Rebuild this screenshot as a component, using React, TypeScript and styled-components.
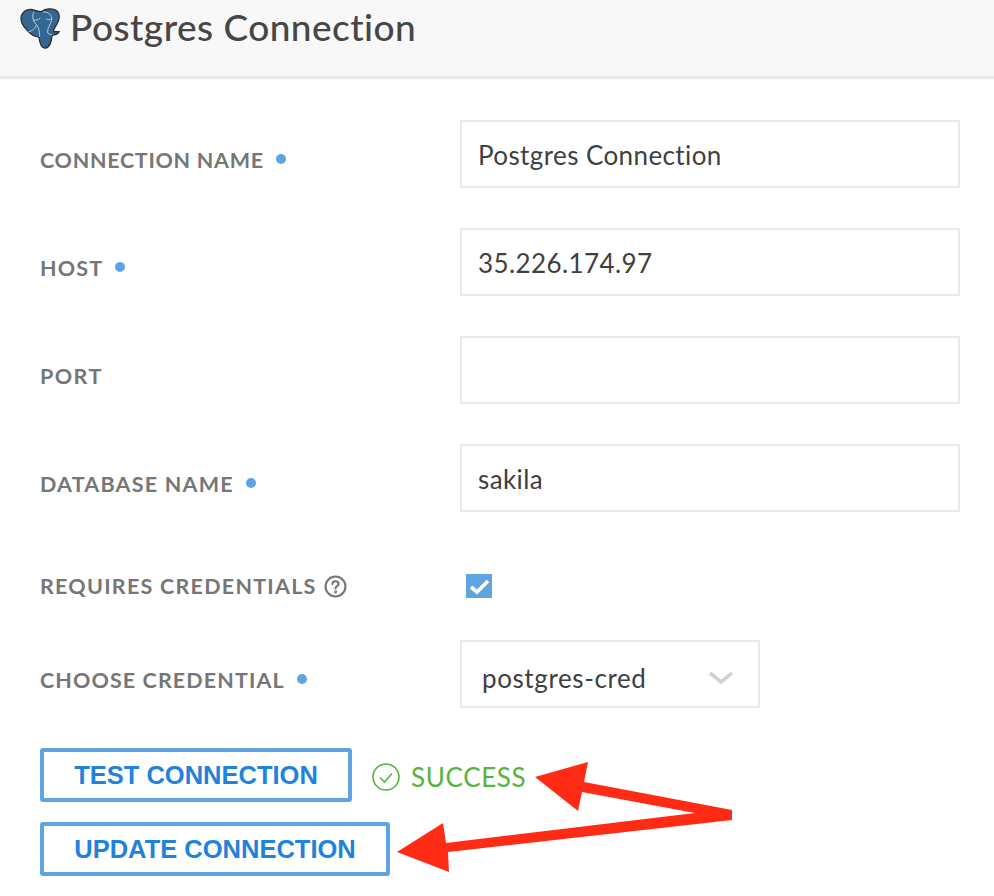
import React from "react";
import styled, { createGlobalStyle } from "styled-components";

const Global = createGlobalStyle`
  html, body { margin: 0; padding: 0; background: #fff; }
  body { font-family: "Lato", "Open Sans", sans-serif; width: 994px; height: 896px; overflow: hidden; }
`;

const Page = styled.div`
  position: relative;
  width: 994px;
  height: 896px;
  overflow: hidden;
`;

const Header = styled.header`
  display: flex;
  align-items: flex-start;
  gap: 10px;
  height: 71px;
  padding: 5px 0 0 20px;
  background: #f8f8f8;
  border-bottom: 3px solid #e9e9e9;
`;

const Logo = styled.svg`
  flex: none;
  margin-top: 3px;
`;

const Title = styled.h1`
  margin: 0;
  font-family: "Lato", sans-serif;
  font-size: 37px;
  line-height: 44px;
  font-weight: 500;
  color: #464646;
  letter-spacing: 0.47px;
`;

const Form = styled.form`
  display: flex;
  flex-direction: column;
  padding: 41px 34px 0 40px;
`;

const Row = styled.div<{ $h: number; $mb: number }>`
  display: grid;
  grid-template-columns: 420px 1fr;
  align-items: center;
  height: ${(p) => p.$h}px;
  margin-bottom: ${(p) => p.$mb}px;
`;

const Label = styled.label<{ $ls: number; $top?: number }>`
  display: flex;
  align-items: center;
  font-family: "Lato", sans-serif;
  font-size: 21.5px;
  font-weight: 700;
  color: #767676;
  letter-spacing: ${(p) => p.$ls}px;
  white-space: nowrap;
  position: relative;
  top: ${(p) => p.$top ?? 6}px;
`;

const Dot = styled.span`
  width: 10px;
  height: 10px;
  border-radius: 50%;
  background: #5ea3e2;
  margin-left: 12px;
  position: relative;
  top: -1px;
`;

const Field = styled.div`
  box-sizing: border-box;
  height: 68px;
  width: 500px;
  border: 2px solid #e9e9e9;
  padding: 2px 16px 0;
  display: flex;
  align-items: center;
  font-size: 26px;
  color: #3f3f3f;
  letter-spacing: 0.4px;
`;

const Help = styled.svg`
  width: 23px;
  height: 23px;
  margin-left: 7px;
`;

const CheckBox = styled.span`
  display: flex;
  align-items: center;
  justify-content: center;
  width: 26px;
  height: 24px;
  margin-left: 6px;
  background: #5ea3e2;
`;

const Select = styled.div`
  box-sizing: border-box;
  width: 300px;
  height: 68px;
  border: 2px solid #e9e9e9;
  padding: 8px 24px 0 20px;
  display: flex;
  align-items: center;
  justify-content: space-between;
  font-size: 26px;
  color: #3f3f3f;
  letter-spacing: 0.6px;
`;

const ActionRow = styled.div<{ $mb: number }>`
  display: flex;
  align-items: center;
  gap: 20px;
  margin-bottom: ${(p) => p.$mb}px;
`;

const Button = styled.button<{ $w: number }>`
  box-sizing: border-box;
  width: ${(p) => p.$w}px;
  height: 54px;
  border: 4px solid #5ea3e2;
  border-radius: 3px;
  background: #fff;
  padding: 0;
  font-family: "Liberation Sans", Arial, sans-serif;
  font-size: 25.5px;
  font-weight: 700;
  color: #1f82dc;
  white-space: nowrap;
`;

const Success = styled.div`
  display: flex;
  align-items: center;
  gap: 11px;
  font-family: "Lato", sans-serif;
  font-size: 26px;
  color: #56b33c;
  letter-spacing: 0.65px;
  position: relative;
  top: 2px;
`;

const Arrows = styled.svg`
  position: absolute;
  left: 0;
  top: 0;
  pointer-events: none;
`;

const Elephant = () => (
  <Logo width="40" height="41" viewBox="28 24 122 124">
    <path
      d="M32 48 C38 30 58 24 72 30 C80 33 88 36 94 34 C104 26 130 22 142 34 C152 44 146 64 136 80 C130 88 128 92 132 96 L147 96 C144 104 132 106 126 106 C124 120 122 145 104 146 C92 146 88 130 86 112 C70 112 62 104 52 94 C40 82 28 64 32 48Z"
      fill="#336791"
      stroke="#2b2f33"
      strokeWidth="4"
    />
    <path
      d="M70 36 C64 48 68 64 76 72 C84 80 88 92 88 112 M98 36 C116 34 128 48 124 62 C120 76 112 84 112 96 C112 102 118 104 126 105 M68 60 C76 62 84 60 90 54 M108 56 C112 60 118 60 124 56 M54 96 C64 94 74 88 78 76"
      fill="none"
      stroke="#d9e6f0"
      strokeWidth="2.4"
    />
  </Logo>
);

export default function App() {
  return (
    <Page>
      <Global />
      <Header>
        <Elephant />
        <Title>Postgres Connection</Title>
      </Header>
      <Form>
        <Row $h={68} $mb={40}>
          <Label $ls={0.7}>CONNECTION NAME<Dot /></Label>
          <Field>Postgres Connection</Field>
        </Row>
        <Row $h={68} $mb={40}>
          <Label $ls={1.2}>HOST<Dot /></Label>
          <Field>35.226.174.97</Field>
        </Row>
        <Row $h={68} $mb={40}>
          <Label $ls={1.45}>PORT</Label>
          <Field />
        </Row>
        <Row $h={68} $mb={44}>
          <Label $ls={1.22}>DATABASE NAME<Dot /></Label>
          <Field>sakila</Field>
        </Row>
        <Row $h={60} $mb={24}>
          <Label $ls={1.25} $top={0}>
            REQUIRES CREDENTIALS
            <Help viewBox="0 0 24 24" fill="none" stroke="#767676" strokeWidth="2.2" strokeLinecap="round">
              <circle cx="12" cy="12" r="10.4" />
              <path d="M8.8 9.5 C8.8 7.5 10.3 6.5 12 6.5 C13.8 6.5 15.2 7.7 15.2 9.3 C15.2 11.5 12 11.6 12 14" />
              <circle cx="12" cy="17.5" r="0.6" />
            </Help>
          </Label>
          <CheckBox>
            <svg width="22" height="18" viewBox="0 0 22 18" fill="none" stroke="#fff" strokeWidth="3.6">
              <path d="M3 10 L9 15 L20 4" />
            </svg>
          </CheckBox>
        </Row>
        <Row $h={68} $mb={40}>
          <Label $ls={1.1}>CHOOSE CREDENTIAL<Dot /></Label>
          <Select>
            postgres-cred
            <svg width="26" height="16" viewBox="0 0 26 16" fill="none" stroke="#d2d2d2" strokeWidth="3.6">
              <path d="M2 3 L13 12 L24 3" />
            </svg>
          </Select>
        </Row>
        <ActionRow $mb={20}>
          <Button type="button" $w={312}>TEST CONNECTION</Button>
          <Success>
            <svg width="28" height="28" viewBox="0 0 28 28" fill="none" stroke="#56b33c" strokeWidth="1.6">
              <circle cx="14" cy="14" r="13" />
              <path d="M8 14.5 L12.5 19 L20 10.5" />
            </svg>
            SUCCESS
          </Success>
        </ActionRow>
        <ActionRow $mb={0}>
          <Button type="button" $w={350}>UPDATE CONNECTION</Button>
        </ActionRow>
      </Form>
      <Arrows width="994" height="896" viewBox="0 0 994 896">
        <path
          d="M535 777 L588 762 L584 782 L732 810 L732 820 L448 852 L449 872 L397 852 L443 823 L446 843 L695 813 L582 792 L578 811 Z"
          fill="#ff2b14"
        />
      </Arrows>
    </Page>
  );
}
